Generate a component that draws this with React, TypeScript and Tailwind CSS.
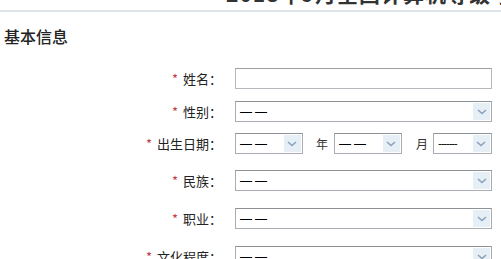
import React from "react";

const FONT = { fontFamily: '"Noto Sans CJK SC", "Liberation Sans", sans-serif' };

function Chevron() {
  return (
    <svg width="10" height="6" viewBox="0 0 10 6" fill="none">
      <path d="M1 1l4 3.5L9 1" stroke="#8aa2bb" strokeWidth="1.6" />
    </svg>
  );
}

function FakeSelect({
  value = "——",
  wide = true,
  className = "",
}: {
  value?: string;
  wide?: boolean;
  className?: string;
}) {
  return (
    <div
      className={`flex h-[21px] items-stretch border border-[#a9adb3] border-t-[#8e9297] bg-white ${className}`}
    >
      <div
        className={`flex flex-1 items-center overflow-hidden whitespace-nowrap pl-[4px] leading-none text-[#000] ${
          wide ? "text-[12px] tracking-[3px]" : "text-[11px] tracking-[-1px]"
        }`}
        style={{ fontFamily: '"Liberation Sans", sans-serif' }}
      >
        {value}
      </div>
      <div className="my-[1px] mr-[1px] flex w-[17px] shrink-0 items-center justify-center bg-[#e6eef6]">
        <Chevron />
      </div>
    </div>
  );
}

function Row({ label, children, className = "" }: { label: string; children: React.ReactNode; className?: string }) {
  return (
    <div className={`flex items-center ${className}`}>
      <div className="w-[235px] shrink-0 pr-[13px] text-right text-[13px] leading-none text-[#222]">
        <span className="mr-[5px] text-[#c0404a]">*</span>
        {label}：
      </div>
      <div className="w-[257px]">{children}</div>
    </div>
  );
}

export default function App() {
  return (
    <div className="h-[259px] w-[501px] overflow-hidden bg-white" style={FONT}>
      <div className="h-[12px] overflow-hidden border-b-2 border-[#dfe4e8]">
        <div className="mt-[-19px] whitespace-nowrap pl-[226px] text-[21px] font-bold leading-[24px] tracking-[1px] text-[#333]">
          2018年9月全国计算机等级考试报名
        </div>
      </div>
      <h2 className="mt-[13px] pl-[4px] text-[16px] font-medium leading-[22px] text-[#222]">基本信息</h2>

      <Row label="姓名" className="mt-[21px]">
        <div className="h-[21px] border border-[#b5b9be] border-t-[#9a9ea3] bg-white" />
      </Row>
      <Row label="性别" className="mt-[12px]">
        <FakeSelect />
      </Row>
      <Row label="出生日期" className="mt-[11px]">
        <div className="flex items-center">
          <FakeSelect className="w-[68px]" />
          <span className="ml-[13px] mr-[6px] text-[12px] text-[#333]">年</span>
          <FakeSelect className="w-[68px]" />
          <span className="ml-[14px] mr-[5px] text-[12px] text-[#333]">月</span>
          <FakeSelect className="w-[59px]" value="-------" wide={false} />
        </div>
      </Row>
      <Row label="民族" className="mt-[16px]">
        <FakeSelect />
      </Row>
      <Row label="职业" className="mt-[17px]">
        <FakeSelect />
      </Row>
      <Row label="文化程度" className="mt-[17px]">
        <FakeSelect />
      </Row>
    </div>
  );
}
